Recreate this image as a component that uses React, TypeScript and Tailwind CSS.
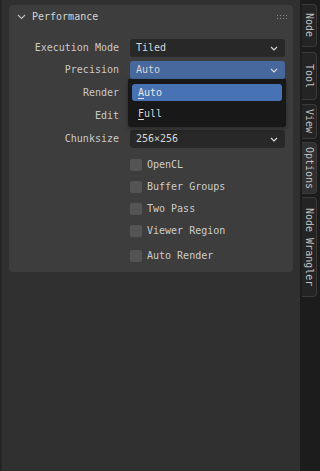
import React from 'react';

const Chevron = () => (
  <svg width="8" height="5" viewBox="0 0 8 5" className="shrink-0">
    <path d="M1 1 L4 4 L7 1" fill="none" stroke="#d8d8d8" strokeWidth="1.2" />
  </svg>
);

const Field = ({ value, active = false }: { value: string; active?: boolean }) => (
  <div
    className={`flex h-[18px] items-center justify-between rounded-[3px] pl-[6px] pr-[7px] ${
      active ? 'bg-[#46689c]' : 'bg-[#282828]'
    }`}
  >
    <span className="text-[#d6d6d6]">{value}</span>
    <Chevron />
  </div>
);

const App = () => {
  // Render / Edit sit under the open menu, so their values are hidden
  const rows = [
    { label: 'Execution Mode', value: 'Tiled', mt: 'mt-[10px]' },
    { label: 'Precision', value: 'Auto', active: true, mt: 'mt-[4px]' },
    { label: 'Render', value: '', mt: 'mt-[5px]' },
    { label: 'Edit', value: '', mt: 'mt-[5px]' },
    { label: 'Chunksize', value: '256×256', mt: 'mt-[5px]' },
  ];

  const checks = [
    { label: 'OpenCL', mt: 'mt-[11px]' },
    { label: 'Buffer Groups', mt: 'mt-[10px]' },
    { label: 'Two Pass', mt: 'mt-[10px]' },
    { label: 'Viewer Region', mt: 'mt-[10px]' },
    { label: 'Auto Render', mt: 'mt-[13px]' },
  ];

  const tabs = [
    { name: 'Node', cls: 'mt-[4px] h-[43px]' },
    { name: 'Tool', cls: 'mt-[5px] h-[48px]' },
    { name: 'View', cls: 'mt-[4px] h-[35px]' },
    { name: 'Options', cls: 'mt-[3px] h-[52px]', active: true },
    { name: 'Node Wrangler', cls: 'mt-[3px] h-[100px]' },
  ];

  return (
    <div
      className="flex h-[471px] w-[320px] overflow-hidden bg-[#303030] text-[10px] leading-none text-[#cfcfcf]"
      style={{ fontFamily: '"DejaVu Sans Mono", "Liberation Mono", monospace' }}
    >
      {/* Main region */}
      <div className="w-[300px] border-l-2 border-[#262626] pl-[7px] pr-[7px] pt-[5px]">
        <div className="relative h-[267px] rounded-[4px] bg-[#3d3d3d] pl-[8px] pr-[8px]">
          {/* Header */}
          <div className="flex h-[24px] items-center">
            <svg width="9" height="6" viewBox="0 0 9 6">
              <path d="M1 1 L4.5 4.5 L8 1" fill="none" stroke="#bdbdbd" strokeWidth="1.1" />
            </svg>
            <span className="ml-[6px] text-[#d4d4d4]">Performance</span>
            <svg width="10" height="5" viewBox="0 0 10 5" className="ml-auto mr-[-2px]">
              {[0, 3, 6, 9].map((x) => (
                <g key={x}>
                  <rect x={x} y="0" width="1" height="1" fill="#8a8a8a" />
                  <rect x={x} y="3" width="1" height="1" fill="#8a8a8a" />
                </g>
              ))}
            </svg>
          </div>

          {/* Property rows */}
          {rows.map((row) => (
            <div key={row.label} className={`flex items-center ${row.mt}`}>
              <div className="w-[102px] text-right text-[#c8c8c8]">{row.label}</div>
              <div className="ml-[11px] flex-1">
                <Field value={row.value} active={row.active} />
              </div>
            </div>
          ))}

          {/* Checkboxes */}
          {checks.map((c) => (
            <div key={c.label} className={`ml-[113px] flex items-center ${c.mt}`}>
              <div className="h-[12px] w-[12px] rounded-[2px] bg-[#545454]" />
              <span className="ml-[5px] text-[#cccccc]">{c.label}</span>
            </div>
          ))}

          {/* Dropdown menu */}
          <div className="absolute left-[119px] top-[74px] h-[48px] w-[158px] rounded-b-[3px] bg-[#181818] pt-[5px] shadow-[0_2px_4px_rgba(0,0,0,0.35)]">
            <div className="mx-[4px] flex h-[17px] items-center rounded-[3px] bg-[#4772b3] pl-[6px] text-[#e6e6e6]">
              <span>
                <span className="underline underline-offset-2">A</span>uto
              </span>
            </div>
            <div className="mx-[4px] mt-[4px] flex h-[17px] items-center pl-[6px] text-[#d6d6d6]">
              <span>
                <span className="underline underline-offset-2">F</span>ull
              </span>
            </div>
          </div>
        </div>
      </div>

      {/* Sidebar tabs */}
      <div className="flex w-[20px] flex-col bg-[#1c1c1c] pl-[2px]">
        {tabs.map((t) => (
          <div
            key={t.name}
            className={`${t.cls} flex w-[15px] shrink-0 items-center justify-center overflow-hidden rounded-r-[4px] border border-l-0 border-[#3a3a3a] ${
              t.active ? 'bg-[#303030]' : 'bg-[#242424]'
            }`}
          >
            <span className="text-[10px] text-[#c0c0c0] [writing-mode:vertical-rl]">{t.name}</span>
          </div>
        ))}
      </div>
    </div>
  );
};

export default App;
